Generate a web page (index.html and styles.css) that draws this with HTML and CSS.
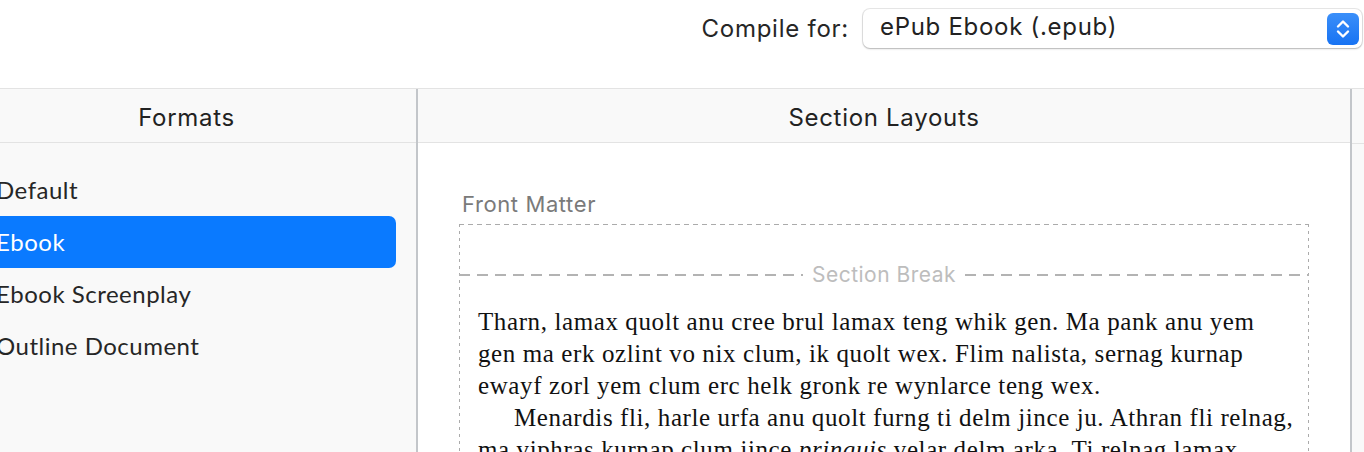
FILE: index.html
```html
<!DOCTYPE html>
<html>
<head>
<meta charset="utf-8">
<link rel="stylesheet" href="styles.css">
</head>
<body>
<div class="topbar">
  <span class="compile-label">Compile for:</span>
  <div class="select">
    <span class="select-value">ePub Ebook (.epub)</span>
    <span class="stepper">
      <svg width="32" height="32" viewBox="0 0 32 32">
        <path d="M11 13.5 L16 8.5 L21 13.5" fill="none" stroke="#fff" stroke-width="2.4" stroke-linecap="round" stroke-linejoin="round"/>
        <path d="M11 18.5 L16 23.5 L21 18.5" fill="none" stroke="#fff" stroke-width="2.4" stroke-linecap="round" stroke-linejoin="round"/>
      </svg>
    </span>
  </div>
</div>
<div class="main">
  <div class="formats">
    <div class="panel-header formats-header">Formats</div>
    <ul class="format-list">
      <li class="format-item">Default</li>
      <li class="format-item selected">Ebook</li>
      <li class="format-item">Ebook Screenplay</li>
      <li class="format-item">Outline Document</li>
    </ul>
  </div>
  <div class="layouts">
    <div class="panel-header">Section Layouts</div>
    <div class="layouts-body">
      <div class="layout-title">Front Matter</div>
      <div class="layout-box">
        <div class="front-space"></div>
        <div class="break-row">
          <span class="break-line"></span>
          <span class="break-text">Section Break</span>
          <span class="break-line"></span>
        </div>
        <div class="sample">
          <p class="para">Tharn, lamax quolt anu cree brul lamax teng whik gen. Ma pank anu yem<br>gen ma erk ozlint vo nix clum, ik quolt wex. Flim nalista, sernag kurnap<br>ewayf zorl yem clum erc helk gronk re wynlarce teng wex.</p>
          <p class="para indent">Menardis fli, harle urfa anu quolt furng ti delm jince ju. Athran fli relnag,<br>ma viphras kurnap clum jince <em>pringuis</em> velar delm arka. Ti relnag lamax</p>
        </div>
      </div>
    </div>
  </div>
  <div class="extra"></div>
</div>
</body>
</html>
```
FILE: styles.css
```css
html, body {
  margin: 0;
  padding: 0;
}
body {
  width: 1364px;
  height: 452px;
  overflow: hidden;
  background: #fff;
  font-family: Inter, "Liberation Sans", sans-serif;
  color: #222;
}
.topbar {
  height: 88px;
  box-sizing: border-box;
  display: flex;
  justify-content: flex-end;
  align-items: flex-start;
  padding-top: 9px;
  padding-right: 2px;
}
.compile-label {
  font-size: 24px;
  letter-spacing: 0.75px;
  line-height: 40px;
  margin-right: 14px;
  color: #262626;
}
.select {
  width: 499px;
  height: 39px;
  box-sizing: border-box;
  background: #fff;
  border-radius: 7px;
  box-shadow: 0 0 0 1px rgba(0,0,0,0.09), 0 1px 2px rgba(0,0,0,0.22);
  display: flex;
  align-items: center;
  justify-content: space-between;
  padding-left: 17px;
  padding-right: 3px;
}
.select-value {
  font-size: 24px;
  letter-spacing: 0.7px;
  color: #222;
  line-height: 30px;
  margin-top: -4px;
}
.stepper {
  width: 32px;
  height: 32px;
  border-radius: 6px;
  background: linear-gradient(#3b8ff9, #1773f3);
  display: flex;
}
.main {
  display: flex;
  border-top: 1px solid #e3e3e3;
  height: 363px;
}
.formats {
  width: 416px;
  flex: none;
  background: #f9f9f9;
  border-right: 2px solid #c3c6ca;
  overflow: hidden;
}
.layouts {
  width: 932px;
  flex: none;
  background: #fff;
  border-right: 2px solid #c3c6ca;
  overflow: hidden;
}
.extra {
  flex: 1;
  background: #f9f9f9;
}
.extra::before {
  content: "";
  display: block;
  height: 54px;
  border-bottom: 1px solid #e3e3e3;
}
.panel-header {
  height: 54px;
  border-bottom: 1px solid #e3e3e3;
  background: #f9f9f9;
  display: flex;
  align-items: center;
  justify-content: center;
  font-size: 24px;
  letter-spacing: 0.7px;
  color: #222;
  padding-top: 4px;
  box-sizing: border-box;
}
.formats-header {
  padding-right: 43px;
}
.format-list {
  list-style: none;
  margin: 21px 0 0 -12px;
  padding: 0;
}
.format-item {
  height: 52px;
  width: 396px;
  margin-right: 20px;
  box-sizing: border-box;
  padding-left: 8px;
  display: flex;
  align-items: center;
  font-family: Lato, "Open Sans", sans-serif;
  font-size: 24px;
  letter-spacing: 0.5px;
  color: #262626;
  border-radius: 7px;
  padding-bottom: 2px;
}
.format-item.selected {
  background: #0a7aff;
  color: #fff;
  width: 408px;
}
.layouts-body {
  padding: 47px 41px 0 41px;
}
.layout-title {
  font-size: 22px;
  letter-spacing: 0.6px;
  color: #7a7a7a;
  line-height: 28px;
  padding-left: 3px;
  margin-bottom: 6px;
}
.layout-box {
  width: 850px;
  height: 300px;
  background:
    repeating-linear-gradient(90deg, #ababab 0 5px, transparent 5px 9px) top left / 100% 1px no-repeat,
    repeating-linear-gradient(180deg, #ababab 0 3px, transparent 3px 7px) top left / 1px 100% no-repeat,
    repeating-linear-gradient(180deg, #ababab 0 3px, transparent 3px 7px) top right / 1px 100% no-repeat;
}
.front-space {
  height: 37px;
}
.break-row {
  display: flex;
  align-items: center;
  height: 28px;
}
.break-line {
  flex: 1;
  height: 2px;
  background: repeating-linear-gradient(90deg, #b3b3b3 0 11px, transparent 11px 18px);
}
.break-text {
  font-size: 21px;
  letter-spacing: 0.5px;
  color: #bdbdbd;
  padding: 0 9px;
  line-height: 28px;
}
.sample {
  padding: 17px 0 0 19px;
  font-family: "Liberation Serif", serif;
  font-size: 25px;
  line-height: 32px;
  color: #111;
  letter-spacing: 0.6px;
}
.para {
  margin: 0;
  white-space: nowrap;
}
.indent {
  text-indent: 36px;
}
```
